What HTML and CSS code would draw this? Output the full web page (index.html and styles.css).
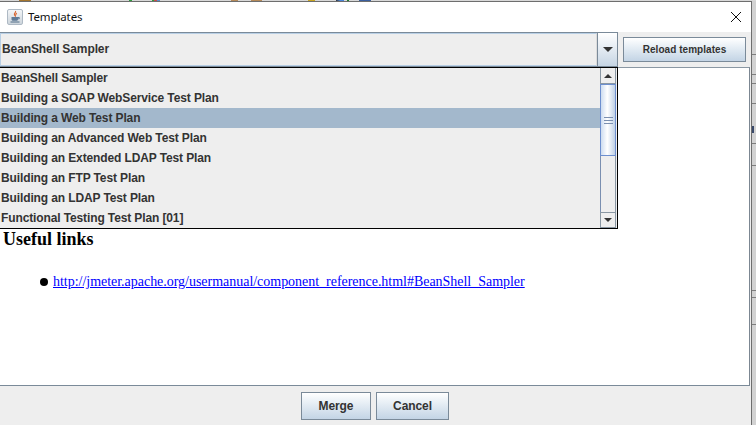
FILE: index.html
```html
<!DOCTYPE html>
<html lang="en">
<head>
    <meta charset="UTF-8">
    <meta name="viewport" content="width=device-width, initial-scale=1.0">
    <title>Templates</title>
    <link rel="stylesheet" href="styles.css">
</head>
<body>
    <div class="desktop-top"></div>
    <div class="window">
        <div class="titlebar">
            <div class="app-icon">
                <svg width="14" height="14" viewBox="0 0 14 14">
                    <path d="M7.500 1c.8 1.300-1.600 2.200-1.100 3.600.2.600.5.900.8 1.300-.1-.9 1.500-1.700 1.200-3" fill="none" stroke="#d9622b" stroke-width="1.100"/>
                    <path d="M3.500 7h6.500v2.300c0 1-.9 1.500-1.800 1.500H5.300c-.9 0-1.800-.5-1.800-1.500z" fill="#5f7a96"/>
                    <path d="M10 7.500h1.300v1.300H10" fill="none" stroke="#5f7a96"/>
                    <path d="M2.500 12h9" stroke="#4e6a86" stroke-width="1"/>
                </svg>
            </div>
            <span class="title">Templates</span>
            <svg class="close" width="12" height="12" viewBox="0 0 12 12">
                <path d="M1 1l10 10M11 1L1 11" stroke="#111" stroke-width="1" fill="none"/>
            </svg>
        </div>

        <div class="toolbar">
            <div class="combo">
                <div class="combo-value">BeanShell Sampler</div>
                <div class="combo-arrow"><span class="arrow-down"></span></div>
            </div>
            <button class="button reload">Reload templates</button>
        </div>

        <div class="content">
            <div class="popup">
                <ul class="options">
                    <li>BeanShell Sampler</li>
                    <li>Building a SOAP WebService Test Plan</li>
                    <li class="selected">Building a Web Test Plan</li>
                    <li>Building an Advanced Web Test Plan</li>
                    <li>Building an Extended LDAP Test Plan</li>
                    <li>Building an FTP Test Plan</li>
                    <li>Building an LDAP Test Plan</li>
                    <li>Functional Testing Test Plan [01]</li>
                </ul>
                <div class="scrollbar">
                    <div class="scroll-btn"><span class="arrow-up small"></span></div>
                    <div class="thumb">
                        <span class="grip"></span>
                    </div>
                    <div class="track"></div>
                    <div class="scroll-btn bottom"><span class="arrow-down small"></span></div>
                </div>
            </div>
            <h2>Useful links</h2>
            <ul class="links">
                <li><a href="#">http://jmeter.apache.org/usermanual/component_reference.html#BeanShell_Sampler</a></li>
            </ul>
        </div>

        <div class="footer">
            <button class="button merge">Merge</button>
            <button class="button cancel">Cancel</button>
        </div>
    </div>
    <div class="desktop-side">
        <span class="side-line"></span>
        <span class="side-line"></span>
        <span class="side-line"></span>
        <span class="side-line"></span>
        <span class="side-line"></span>
        <span class="side-line"></span>
        <span class="side-line"></span>
        <span class="side-line"></span>
        <span class="side-line"></span>
        <span class="side-mark"></span>
    </div>
</body>
</html>
```

FILE: styles.css
```css
html, body {
    margin: 0;
    padding: 0;
}

body {
    width: 756px;
    height: 425px;
    overflow: hidden;
    background-color: #d2d2d2;
    font-family: 'Liberation Sans', Arial, sans-serif;
    position: relative;
}

/* bits of the desktop showing above the dialog */
.desktop-top {
    height: 1px;
    background: linear-gradient(90deg,
        #d8d8d8 19px, #a5762e 19px, #a5762e 31px,
        #d8d8d8 31px, #d8d8d8 129px, #2f9e3f 129px, #2f9e3f 132px,
        #d8d8d8 132px, #d8d8d8 152px, #2f9e3f 152px, #2f9e3f 154px,
        #c94a4a 154px, #c94a4a 157px, #5a8fd0 157px, #5a8fd0 160px,
        #d8d8d8 160px, #d8d8d8 231px, #b58a5a 231px, #b58a5a 238px,
        #d8d8d8 238px, #d8d8d8 251px, #b58a5a 251px, #b58a5a 262px,
        #d8d8d8 262px, #d8d8d8 308px, #c9a520 308px, #c9a520 315px,
        #d8d8d8 315px, #d8d8d8 336px, #333 336px, #4a84d8 340px, #4a84d8 344px,
        #d8d8d8 344px, #d8d8d8 347px, #1f7a2f 347px, #1f7a2f 349px,
        #d8d8d8 349px, #d8d8d8 359px, #3b5f9e 359px, #3b5f9e 371px,
        #d8d8d8 371px);
}

.window {
    width: 752px;
    height: 424px;
    display: flex;
    flex-direction: column;
    background-color: #eeeeee;
    box-sizing: border-box;
    border-top: 1px solid #6e6e6e;
    border-right: 1px solid #6e6e6e;
}

.titlebar {
    height: 30px;
    flex: none;
    display: flex;
    align-items: center;
    background-color: #fff;
    padding: 0 7px;
    box-sizing: border-box;
}

.app-icon {
    width: 16px;
    height: 16px;
    box-sizing: border-box;
    border: 1px solid #aeb9c4;
    border-radius: 2px;
    background: linear-gradient(#f3f5f7, #cdd5dc);
    display: flex;
}

.title {
    margin-left: 5px;
    padding-bottom: 2px;
    font-family: 'Noto Sans', sans-serif;
    font-size: 11.500px;
    letter-spacing: -0.12px;
    color: #111;
}

.close {
    margin-left: auto;
    margin-right: 2px;
}

.toolbar {
    height: 35px;
    flex: none;
    display: flex;
    align-items: center;
    box-sizing: border-box;
}

.combo {
    width: 618px;
    height: 35px;
    flex: none;
    display: flex;
    box-sizing: border-box;
    border-top: 1px solid #7a8a99;
    border-bottom: 1px solid #7a8a99;
}

.combo-value {
    flex: 1;
    display: flex;
    align-items: center;
    padding: 0 0 2px 1px;
    font-size: 12px;
    font-weight: bold;
    letter-spacing: -0.1px;
    color: #333;
    border: 1px solid #b8cfe5;
    border-right-color: #dcdcdc;
}

.combo-arrow {
    width: 19px;
    display: flex;
    align-items: center;
    justify-content: center;
    border-left: 1px solid #7a8a99;
    border-right: 1px solid #7a8a99;
    background: linear-gradient(#ffffff, #c6d5e4);
}

.arrow-down, .arrow-up {
    width: 0;
    height: 0;
    border-left: 5px solid transparent;
    border-right: 5px solid transparent;
}

.arrow-down {
    border-top: 5px solid #333;
}

.arrow-up {
    border-bottom: 5px solid #333;
}

.arrow-up.small, .arrow-down.small {
    border-left-width: 4px;
    border-right-width: 4px;
}

.arrow-up.small {
    border-bottom-width: 4px;
}

.arrow-down.small {
    border-top-width: 4px;
}

.button {
    font-family: 'Liberation Sans', Arial, sans-serif;
    font-size: 12px;
    font-weight: bold;
    color: #333;
    border: 1px solid #7a8a99;
    background: linear-gradient(#ffffff 0%, #e9f0f6 35%, #c3d4e5 100%);
    padding: 0;
    cursor: pointer;
}

.reload {
    width: 123px;
    height: 25px;
    margin-left: 5px;
    font-size: 10px;
    letter-spacing: 0.05px;
}

.content {
    flex: 1;
    margin-right: 1px;
    position: relative;
    background-color: #fff;
    border-top: 1px solid #8a97a3;
    border-right: 1px solid #7c8792;
    box-sizing: border-box;
    font-family: 'Liberation Serif', 'Times New Roman', serif;
    color: #000;
}

.popup {
    position: absolute;
    left: 0;
    top: -1px;
    width: 618px;
    height: 162px;
    box-sizing: border-box;
    border: 1px solid #000;
    border-left: none;
    background-color: #eeeeee;
    display: flex;
}

.options {
    flex: 1;
    list-style: none;
    margin: 0;
    padding: 0;
    font-family: 'Liberation Sans', Arial, sans-serif;
    font-size: 12px;
    font-weight: bold;
    letter-spacing: -0.12px;
    color: #333;
}

.options li {
    height: 20px;
    line-height: 20px;
    padding-left: 1px;
}

.options .selected {
    background-color: #a3b8cc;
}

.scrollbar {
    width: 16px;
    flex: none;
    margin: 0 1px 0 0;
    display: flex;
    flex-direction: column;
    box-sizing: border-box;
}

.scroll-btn {
    height: 16px;
    flex: none;
    box-sizing: border-box;
    display: flex;
    align-items: center;
    justify-content: center;
    border: 1px solid #8a97a3;
    border-top: none;
    background-color: #eeeeee;
}

.scroll-btn.bottom {
    border-top: 1px solid #8a97a3;
}

.thumb {
    height: 72px;
    flex: none;
    box-sizing: border-box;
    display: flex;
    align-items: center;
    justify-content: center;
    border: 1px solid #6d8fcf;
    background: linear-gradient(90deg, #cddcf0, #ffffff 45%, #bfd0e6);
}

.grip {
    width: 9px;
    height: 5px;
    border-top: 1px solid #7a8fb0;
    border-bottom: 1px solid #7a8fb0;
}

.grip::after {
    content: "";
    display: block;
    height: 1px;
    margin-top: 2px;
    background-color: #7a8fb0;
}

.track {
    flex: 1;
    border-left: 1px solid #7a8fb0;
    border-right: 1px solid #8a97a3;
}

h2 {
    margin: 0;
    padding: 161px 0 0 3px;
    font-size: 18px;
    line-height: 21px;
}

.links {
    margin: 24px 0 0;
    padding-left: 40px;
    list-style: none;
    font-size: 14px;
    line-height: 16px;
    letter-spacing: -0.025px;
}

.links li {
    display: flex;
    align-items: center;
    gap: 5px;
}

.links li::before {
    content: "";
    width: 8px;
    height: 8px;
    border-radius: 50%;
    background-color: #000;
}

.links a {
    color: #0000ff;
}

.footer {
    height: 40px;
    flex: none;
    display: flex;
    justify-content: center;
    align-items: flex-start;
    gap: 5px;
    padding-top: 6px;
    box-sizing: border-box;
    border-top: 1px solid #7a8a99;
    margin-right: 1px;
}

.merge {
    width: 70px;
    height: 28px;
    letter-spacing: -0.1px;
}

.cancel {
    width: 73px;
    height: 28px;
    letter-spacing: -0.1px;
}

.desktop-side {
    position: absolute;
    left: 752px;
    top: 0;
    width: 4px;
    height: 425px;
}

.side-line {
    position: absolute;
    left: 0;
    width: 4px;
    height: 1px;
    background-color: #7e7e7e;
}

.side-line:nth-child(1) { top: 54px; }
.side-line:nth-child(2) { top: 74px; }
.side-line:nth-child(3) { top: 83px; }
.side-line:nth-child(4) { top: 103px; }
.side-line:nth-child(5) { top: 143px; }
.side-line:nth-child(6) { top: 165px; }
.side-line:nth-child(7) { top: 290px; }
.side-line:nth-child(8) { top: 297px; }
.side-line:nth-child(9) { top: 324px; }

.side-mark {
    position: absolute;
    left: 0;
    top: 126px;
    width: 2px;
    height: 7px;
    background-color: #3a4a6a;
}
```
